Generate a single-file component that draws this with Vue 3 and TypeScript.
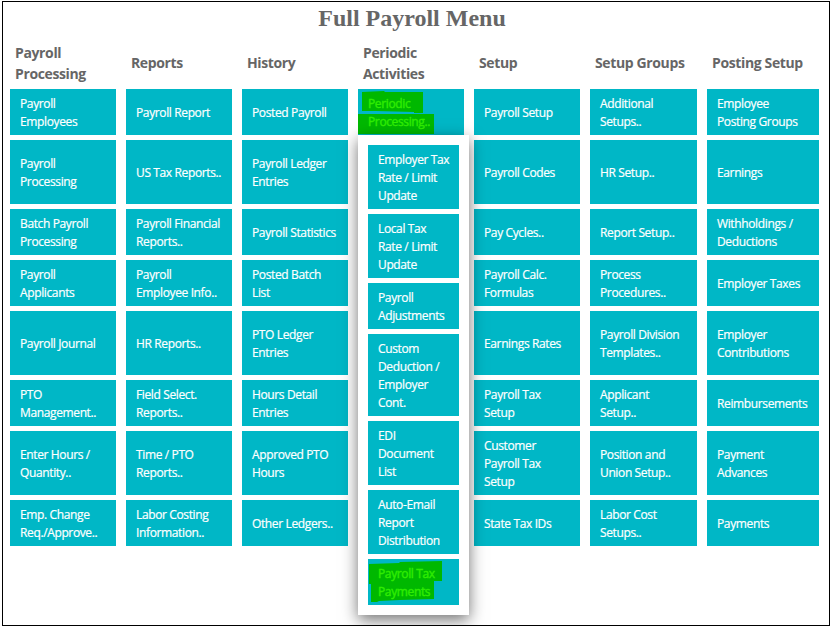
<template>
  <main class="page">
    <h1>Full Payroll Menu</h1>

    <div class="menu">
      <section v-for="column in columns" :key="column.title" class="column">
        <h2>{{ column.title }}</h2>
        <a v-for="item in column.items" :key="item" class="tile">
          <svg v-if="item === openItem" class="marker" viewBox="0 0 106 46">
            <path d="M4 3 L26 2 L27 3 L65 3 V24 H56 V23 L18 22 H4 Z M0 25 H76 V45 H0 Z" />
          </svg>
          <span :class="{ marked: item === openItem }">{{ item }}</span>
        </a>

        <!-- submenu of the opened tile -->
        <div v-if="column.items.includes(openItem)" class="submenu">
          <a v-for="item in submenu" :key="item" class="tile">
            <svg v-if="item === markedItem" class="marker" viewBox="0 0 91 46">
              <path d="M1 5 L31 4 L32 3 L74 2 V22 H66 V40 L32 41 L11 42 L9 43 H3 V25 H1 Z" />
            </svg>
            <span :class="{ marked: item === markedItem }">{{ item }}</span>
          </a>
        </div>
      </section>
    </div>
  </main>
</template>

<script setup lang="ts">
import { ref } from "vue";

interface MenuColumn {
  title: string;
  items: string[];
}

const openItem = ref("Periodic\nProcessing..");
const markedItem = ref("Payroll Tax\nPayments");

const columns: MenuColumn[] = [
  {
    title: "Payroll\nProcessing",
    items: [
      "Payroll\nEmployees",
      "Payroll\nProcessing",
      "Batch Payroll\nProcessing",
      "Payroll\nApplicants",
      "Payroll Journal",
      "PTO\nManagement..",
      "Enter Hours /\nQuantity..",
      "Emp. Change\nReq./Approve..",
    ],
  },
  {
    title: "Reports",
    items: [
      "Payroll Report",
      "US Tax Reports..",
      "Payroll Financial\nReports..",
      "Payroll\nEmployee Info..",
      "HR Reports..",
      "Field Select.\nReports..",
      "Time / PTO\nReports..",
      "Labor Costing\nInformation..",
    ],
  },
  {
    title: "History",
    items: [
      "Posted Payroll",
      "Payroll Ledger\nEntries",
      "Payroll Statistics",
      "Posted Batch\nList",
      "PTO Ledger\nEntries",
      "Hours Detail\nEntries",
      "Approved PTO\nHours",
      "Other Ledgers..",
    ],
  },
  {
    title: "Periodic\nActivities",
    items: ["Periodic\nProcessing.."],
  },
  {
    title: "Setup",
    items: [
      "Payroll Setup",
      "Payroll Codes",
      "Pay Cycles..",
      "Payroll Calc.\nFormulas",
      "Earnings Rates",
      "Payroll Tax\nSetup",
      "Customer\nPayroll Tax\nSetup",
      "State Tax IDs",
    ],
  },
  {
    title: "Setup Groups",
    items: [
      "Additional\nSetups..",
      "HR Setup..",
      "Report Setup..",
      "Process\nProcedures..",
      "Payroll Division\nTemplates..",
      "Applicant\nSetup..",
      "Position and\nUnion Setup..",
      "Labor Cost\nSetups..",
    ],
  },
  {
    title: "Posting Setup",
    items: [
      "Employee\nPosting Groups",
      "Earnings",
      "Withholdings /\nDeductions",
      "Employer Taxes",
      "Employer\nContributions",
      "Reimbursements",
      "Payment\nAdvances",
      "Payments",
    ],
  },
];

const submenu = [
  "Employer Tax\nRate / Limit\nUpdate",
  "Local Tax\nRate / Limit\nUpdate",
  "Payroll\nAdjustments",
  "Custom\nDeduction /\nEmployer\nCont.",
  "EDI\nDocument\nList",
  "Auto-Email\nReport\nDistribution",
  "Payroll Tax\nPayments",
];
</script>

<style>
body {
  background: #fff;
}
</style>

<style scoped>
.page {
  box-sizing: border-box;
  width: 828px;
  height: 625px;
  margin: 1px 0 0 2px;
  padding: 0 10px 0 7px;
  border: 1px solid #000;
  overflow: hidden;
  font-family: "Segoe UI", "Open Sans", sans-serif;
}

h1 {
  margin: 0;
  height: 41px;
  padding: 3px 5px 0 0;
  box-sizing: border-box;
  color: #666;
  font: bold 24px/27px "Liberation Serif", serif;
  text-align: center;
}

.menu {
  display: grid;
  grid-template-columns: repeat(5, 106px) 107px 112px;
  column-gap: 10px;
}

.column {
  position: relative;
  display: grid;
  grid-template-columns: minmax(0, 1fr);
  grid-template-rows: 41px 46px 64px 46px 46px 64px 46px 64px 46px;
  row-gap: 5px;
}

h2 {
  margin: 0;
  padding: 0 0 2px 5px;
  align-self: center;
  color: #666;
  font-size: 14px;
  font-weight: 700;
  line-height: 21px;
  letter-spacing: -0.37px;
  white-space: pre;
}

.tile {
  position: relative;
  display: flex;
  align-items: center;
  padding: 6px 10px 4px;
  background: #00b7c6;
  color: #fff;
  font-size: 12px;
  line-height: 18px;
  letter-spacing: -0.37px;
  -webkit-text-stroke: 0.2px currentColor;
  white-space: pre;
  cursor: pointer;
}

.submenu {
  position: absolute;
  top: 92px;
  left: 0;
  z-index: 1;
  box-sizing: border-box;
  width: 111px;
  display: flex;
  flex-direction: column;
  gap: 5px;
  padding: 10px;
  background: #fff;
  box-shadow: 0 5px 15px rgba(0, 0, 0, 0.55);
}

.marker {
  position: absolute;
  inset: 0;
  width: 100%;
  height: 100%;
  fill: #00b800;
}

.marked {
  position: relative;
  color: #30ec00;
  -webkit-text-stroke-width: 0.4px;
}
</style>
